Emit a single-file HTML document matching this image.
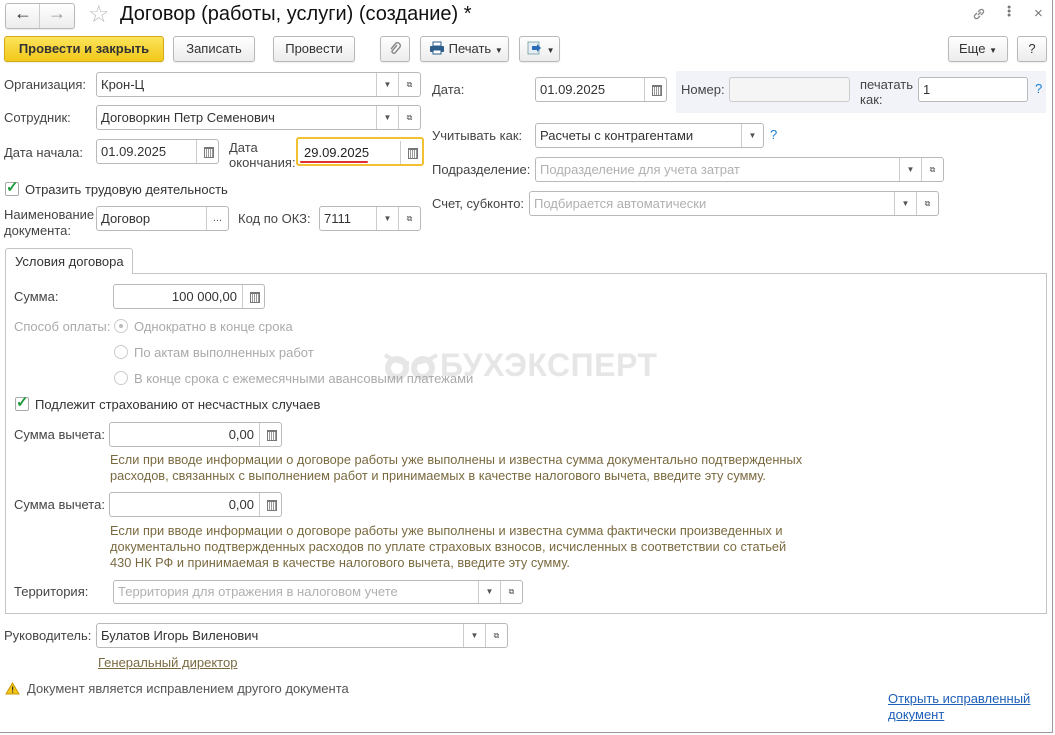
<!DOCTYPE html>
<html><head><meta charset="utf-8"><style>
*{box-sizing:border-box}
body{margin:0;width:1055px;height:735px;background:#fff;font-family:"Liberation Sans",Arial,sans-serif;font-size:13px;color:#333;position:relative;overflow:hidden}
.a{position:absolute;white-space:nowrap}
.btn{position:absolute;border:1px solid #b9b9b9;border-radius:3px;background:linear-gradient(#fff,#ececec);text-align:center;line-height:24px;height:26px;color:#333;box-shadow:0 1px 1px rgba(0,0,0,.08)}
.f{position:absolute;border:1px solid #b9b9b9;border-radius:3px;background:#fff;height:25px;line-height:23px;padding-left:4px;color:#333}
.ph{color:#b0b0b0}
.dd{position:absolute;top:0;bottom:0;border-left:1px solid #ccc;width:22px;text-align:center;font-size:8px;color:#555}
.cal{position:absolute;top:0;bottom:0;right:0;width:22px;border-left:1px solid #ccc}
.cal:after{content:"";position:absolute;left:7px;top:7px;width:8px;height:8px;border:1px solid #777;border-top-width:2px;background:repeating-linear-gradient(90deg,#fff 0 1px,#999 1px 2px)}
.lbl{position:absolute;color:#444;white-space:nowrap}
.note{position:absolute;color:#7a6a40;line-height:16px;white-space:nowrap;font-size:12.8px}
.cb{position:absolute;width:14px;height:14px;border:1px solid #aaa;border-radius:2px;background:#fff}
.rad{position:absolute;width:14px;height:14px;border:1px solid #ccc;border-radius:50%;background:#fff}
</style></head><body>
<div class="a" style="right:2px;top:0;bottom:2px;width:1px;background:#9a9a9a"></div>
<div class="a" style="left:0;right:2px;bottom:2px;height:1px;background:#9a9a9a"></div>

<div class="btn" style="left:5px;top:3px;width:70px;height:26px;padding:0"></div>
<div class="a" style="left:39px;top:4px;width:1px;height:24px;background:#ccc"></div>
<div class="a" style="left:14px;top:3px;font-size:18px;font-weight:bold;color:#333">←</div>
<div class="a" style="left:48px;top:3px;font-size:18px;color:#999">→</div>
<div class="a" style="left:88px;top:0px;font-size:24px;color:#bbb">☆</div>
<div class="a" style="left:120px;top:3px;font-size:20px;color:#111">Договор (работы, услуги) (создание) *</div>
<svg class="a" style="left:971px;top:6px" width="16" height="16" viewBox="0 0 16 16"><path d="M7 9l3-3M6 7L4 9a2 2 0 003 3l2-2M10 9l2-2a2 2 0 00-3-3L7 6" stroke="#888" fill="none" stroke-width="1.3"/></svg>
<div class="a" style="left:1007px;top:6px;width:3px;line-height:4px;font-size:7px;color:#777">●<br>●<br>●</div>
<div class="a" style="left:1034px;top:5px;font-size:15px;color:#777">×</div>

<div class="btn" style="left:4px;top:36px;width:160px;background:linear-gradient(#fbe35a,#f2c81a);border-color:#d4ab17;font-weight:bold;color:#333">Провести и закрыть</div>
<div class="btn" style="left:173px;top:36px;width:82px">Записать</div>
<div class="btn" style="left:273px;top:36px;width:82px">Провести</div>
<div class="btn" style="left:380px;top:36px;width:30px"><svg width="14" height="16" viewBox="0 0 14 16" style="margin-top:4px"><path d="M9 4L4 10a2 2 0 003 2l5-6a3 3 0 00-4-4L3 8" stroke="#888" fill="none" stroke-width="1.4"/></svg></div>
<div class="btn" style="left:420px;top:36px;width:89px;text-align:left;padding-left:8px"><svg width="16" height="14" viewBox="0 0 16 14" style="vertical-align:-2px"><rect x="4" y="1" width="8" height="4" fill="#fff" stroke="#2d5d8a"/><rect x="1" y="5" width="14" height="6" rx="1" fill="#2d5d8a"/><rect x="4" y="9" width="8" height="4" fill="#fff" stroke="#2d5d8a"/></svg> Печать <span style="font-size:8px">▼</span></div>
<div class="btn" style="left:519px;top:36px;width:41px;text-align:left;padding-left:7px"><svg width="16" height="14" viewBox="0 0 16 14" style="vertical-align:-2px"><rect x="1" y="1" width="11" height="12" fill="#e6eef6" stroke="#8aa"/><path d="M5 5h5v-2l4 4-4 4v-2H5z" fill="#2a6db5"/></svg> <span style="font-size:8px">▼</span></div>
<div class="btn" style="left:948px;top:36px;width:60px">Еще <span style="font-size:8px">▼</span></div>
<div class="btn" style="left:1017px;top:36px;width:30px">?</div>

<div class="lbl" style="left:4px;top:77px">Организация:</div>
<div class="f" style="left:96px;top:72px;width:325px">Крон-Ц<div class="dd" style="right:22px">▼</div><div class="dd" style="right:0">⧉</div></div>
<div class="lbl" style="left:4px;top:110px">Сотрудник:</div>
<div class="f" style="left:96px;top:105px;width:325px">Договоркин Петр Семенович<div class="dd" style="right:22px">▼</div><div class="dd" style="right:0">⧉</div></div>
<div class="lbl" style="left:4px;top:145px">Дата начала:</div>
<div class="f" style="left:96px;top:139px;width:123px">01.09.2025<div class="cal"></div></div>
<div class="lbl" style="left:229px;top:140px;line-height:15px">Дата<br>окончания:</div>
<div class="f" style="left:296px;top:137px;width:128px;height:29px;border:2px solid #f2c030;line-height:27px;padding-left:6px;color:#222">29.09.2025<div class="cal" style="top:2px"></div></div>
<div class="a" style="left:300px;top:161px;width:68px;height:2px;background:#e03030;border-radius:1px"></div>
<div class="cb" style="left:5px;top:182px"></div><div class="a" style="left:6px;top:178px;color:#1e9a3a;font-size:15px;font-weight:bold">✓</div>
<div class="lbl" style="left:25px;top:182px;color:#333">Отразить трудовую деятельность</div>
<div class="lbl" style="left:4px;top:207px;line-height:16px">Наименование<br>документа:</div>
<div class="f" style="left:96px;top:206px;width:133px">Договор<div class="dd" style="right:0;font-size:11px">...</div></div>
<div class="lbl" style="left:238px;top:211px">Код по ОКЗ:</div>
<div class="f" style="left:319px;top:206px;width:102px">7111<div class="dd" style="right:22px">▼</div><div class="dd" style="right:0">⧉</div></div>

<div class="lbl" style="left:432px;top:82px">Дата:</div>
<div class="f" style="left:535px;top:77px;width:132px">01.09.2025<div class="cal"></div></div>
<div class="a" style="left:676px;top:71px;width:370px;height:42px;background:#f1f3f9"></div>
<div class="lbl" style="left:681px;top:82px">Номер:</div>
<div class="f" style="left:729px;top:77px;width:121px;background:#f5f5f5;border-color:#ccc"></div>
<div class="lbl" style="left:860px;top:77px;line-height:15px">печатать<br>как:</div>
<div class="f" style="left:918px;top:77px;width:110px">1</div>
<div class="a" style="left:1035px;top:81px;color:#1d7fd0">?</div>
<div class="lbl" style="left:432px;top:128px">Учитывать как:</div>
<div class="f" style="left:535px;top:123px;width:229px">Расчеты с контрагентами<div class="dd" style="right:0">▼</div></div>
<div class="a" style="left:770px;top:127px;color:#1d7fd0">?</div>
<div class="lbl" style="left:432px;top:162px">Подразделение:</div>
<div class="f ph" style="left:535px;top:157px;width:409px">Подразделение для учета затрат<div class="dd" style="right:22px">▼</div><div class="dd" style="right:0">⧉</div></div>
<div class="lbl" style="left:432px;top:196px">Счет, субконто:</div>
<div class="f ph" style="left:529px;top:191px;width:410px">Подбирается автоматически<div class="dd" style="right:22px">▼</div><div class="dd" style="right:0">⧉</div></div>

<div class="a" style="left:5px;top:273px;width:1042px;height:341px;border:1px solid #c4c4c4"></div>
<div class="a" style="left:5px;top:248px;width:128px;height:26px;border:1px solid #c4c4c4;border-bottom:none;border-radius:3px 3px 0 0;background:#fff;padding:5px 0 0 9px;color:#333">Условия договора</div>

<svg class="a" style="left:383px;top:352px" width="56" height="28" viewBox="0 0 56 28"><circle cx="14" cy="16" r="9" fill="none" stroke="#e6e6e6" stroke-width="6"/><circle cx="40" cy="16" r="9" fill="none" stroke="#e6e6e6" stroke-width="6"/><path d="M2 3q12 8 24 8M54 3q-12 8-24 8" stroke="#e6e6e6" stroke-width="4" fill="none"/></svg>
<div class="a" style="left:440px;top:347px;font-size:32px;font-weight:bold;color:#e6e6e6;letter-spacing:0.5px">БУХЭКСПЕРТ</div>

<div class="lbl" style="left:14px;top:289px">Сумма:</div>
<div class="f" style="left:113px;top:284px;width:152px;text-align:right;padding-right:27px">100 000,00<div class="cal"></div></div>
<div class="lbl" style="left:14px;top:319px;color:#aaa">Способ оплаты:</div>
<div class="rad" style="left:114px;top:319px"></div><div class="a" style="left:119px;top:324px;width:4px;height:4px;border-radius:50%;background:#bbb"></div>
<div class="lbl" style="left:134px;top:319px;color:#aaa">Однократно в конце срока</div>
<div class="rad" style="left:114px;top:345px"></div><div class="lbl" style="left:134px;top:345px;color:#aaa">По актам выполненных работ</div>
<div class="rad" style="left:114px;top:371px"></div><div class="lbl" style="left:134px;top:371px;color:#aaa">В конце срока с ежемесячными авансовыми платежами</div>
<div class="cb" style="left:15px;top:397px"></div><div class="a" style="left:16px;top:393px;color:#1e9a3a;font-size:15px;font-weight:bold">✓</div>
<div class="lbl" style="left:35px;top:397px;color:#333">Подлежит страхованию от несчастных случаев</div>
<div class="lbl" style="left:14px;top:427px">Сумма вычета:</div>
<div class="f" style="left:109px;top:422px;width:173px;text-align:right;padding-right:27px">0,00<div class="cal"></div></div>
<div class="note" style="left:110px;top:452px">Если при вводе информации о договоре работы уже выполнены и известна сумма документально подтвержденных<br>расходов, связанных с выполнением работ и принимаемых в качестве налогового вычета, введите эту сумму.</div>
<div class="lbl" style="left:14px;top:497px">Сумма вычета:</div>
<div class="f" style="left:109px;top:492px;width:173px;text-align:right;padding-right:27px">0,00<div class="cal"></div></div>
<div class="note" style="left:110px;top:523px">Если при вводе информации о договоре работы уже выполнены и известна сумма фактически произведенных и<br>документально подтвержденных расходов по уплате страховых взносов, исчисленных в соответствии со статьей<br>430 НК РФ и принимаемая в качестве налогового вычета, введите эту сумму.</div>
<div class="lbl" style="left:14px;top:584px">Территория:</div>
<div class="f ph" style="left:113px;top:580px;width:410px;height:24px;line-height:22px">Территория для отражения в налоговом учете<div class="dd" style="right:22px">▼</div><div class="dd" style="right:0">⧉</div></div>

<div class="lbl" style="left:4px;top:628px">Руководитель:</div>
<div class="f" style="left:96px;top:623px;width:412px">Булатов Игорь Виленович<div class="dd" style="right:22px">▼</div><div class="dd" style="right:0">⧉</div></div>
<div class="a" style="left:98px;top:655px;color:#7a6a40;text-decoration:underline">Генеральный директор</div>
<svg class="a" style="left:5px;top:682px" width="15" height="13" viewBox="0 0 15 13"><path d="M7.5 1L14 12H1z" fill="#f5c518" stroke="#c99a00"/><rect x="7" y="4.5" width="1.2" height="4" fill="#333"/><rect x="7" y="9.5" width="1.2" height="1.2" fill="#333"/></svg>
<div class="lbl" style="left:27px;top:681px;color:#555">Документ является исправлением другого документа</div>
<div class="a" style="left:888px;top:691px;color:#1d5fb8;text-decoration:underline;line-height:16px">Открыть исправленный<br>документ</div>
</body></html>
